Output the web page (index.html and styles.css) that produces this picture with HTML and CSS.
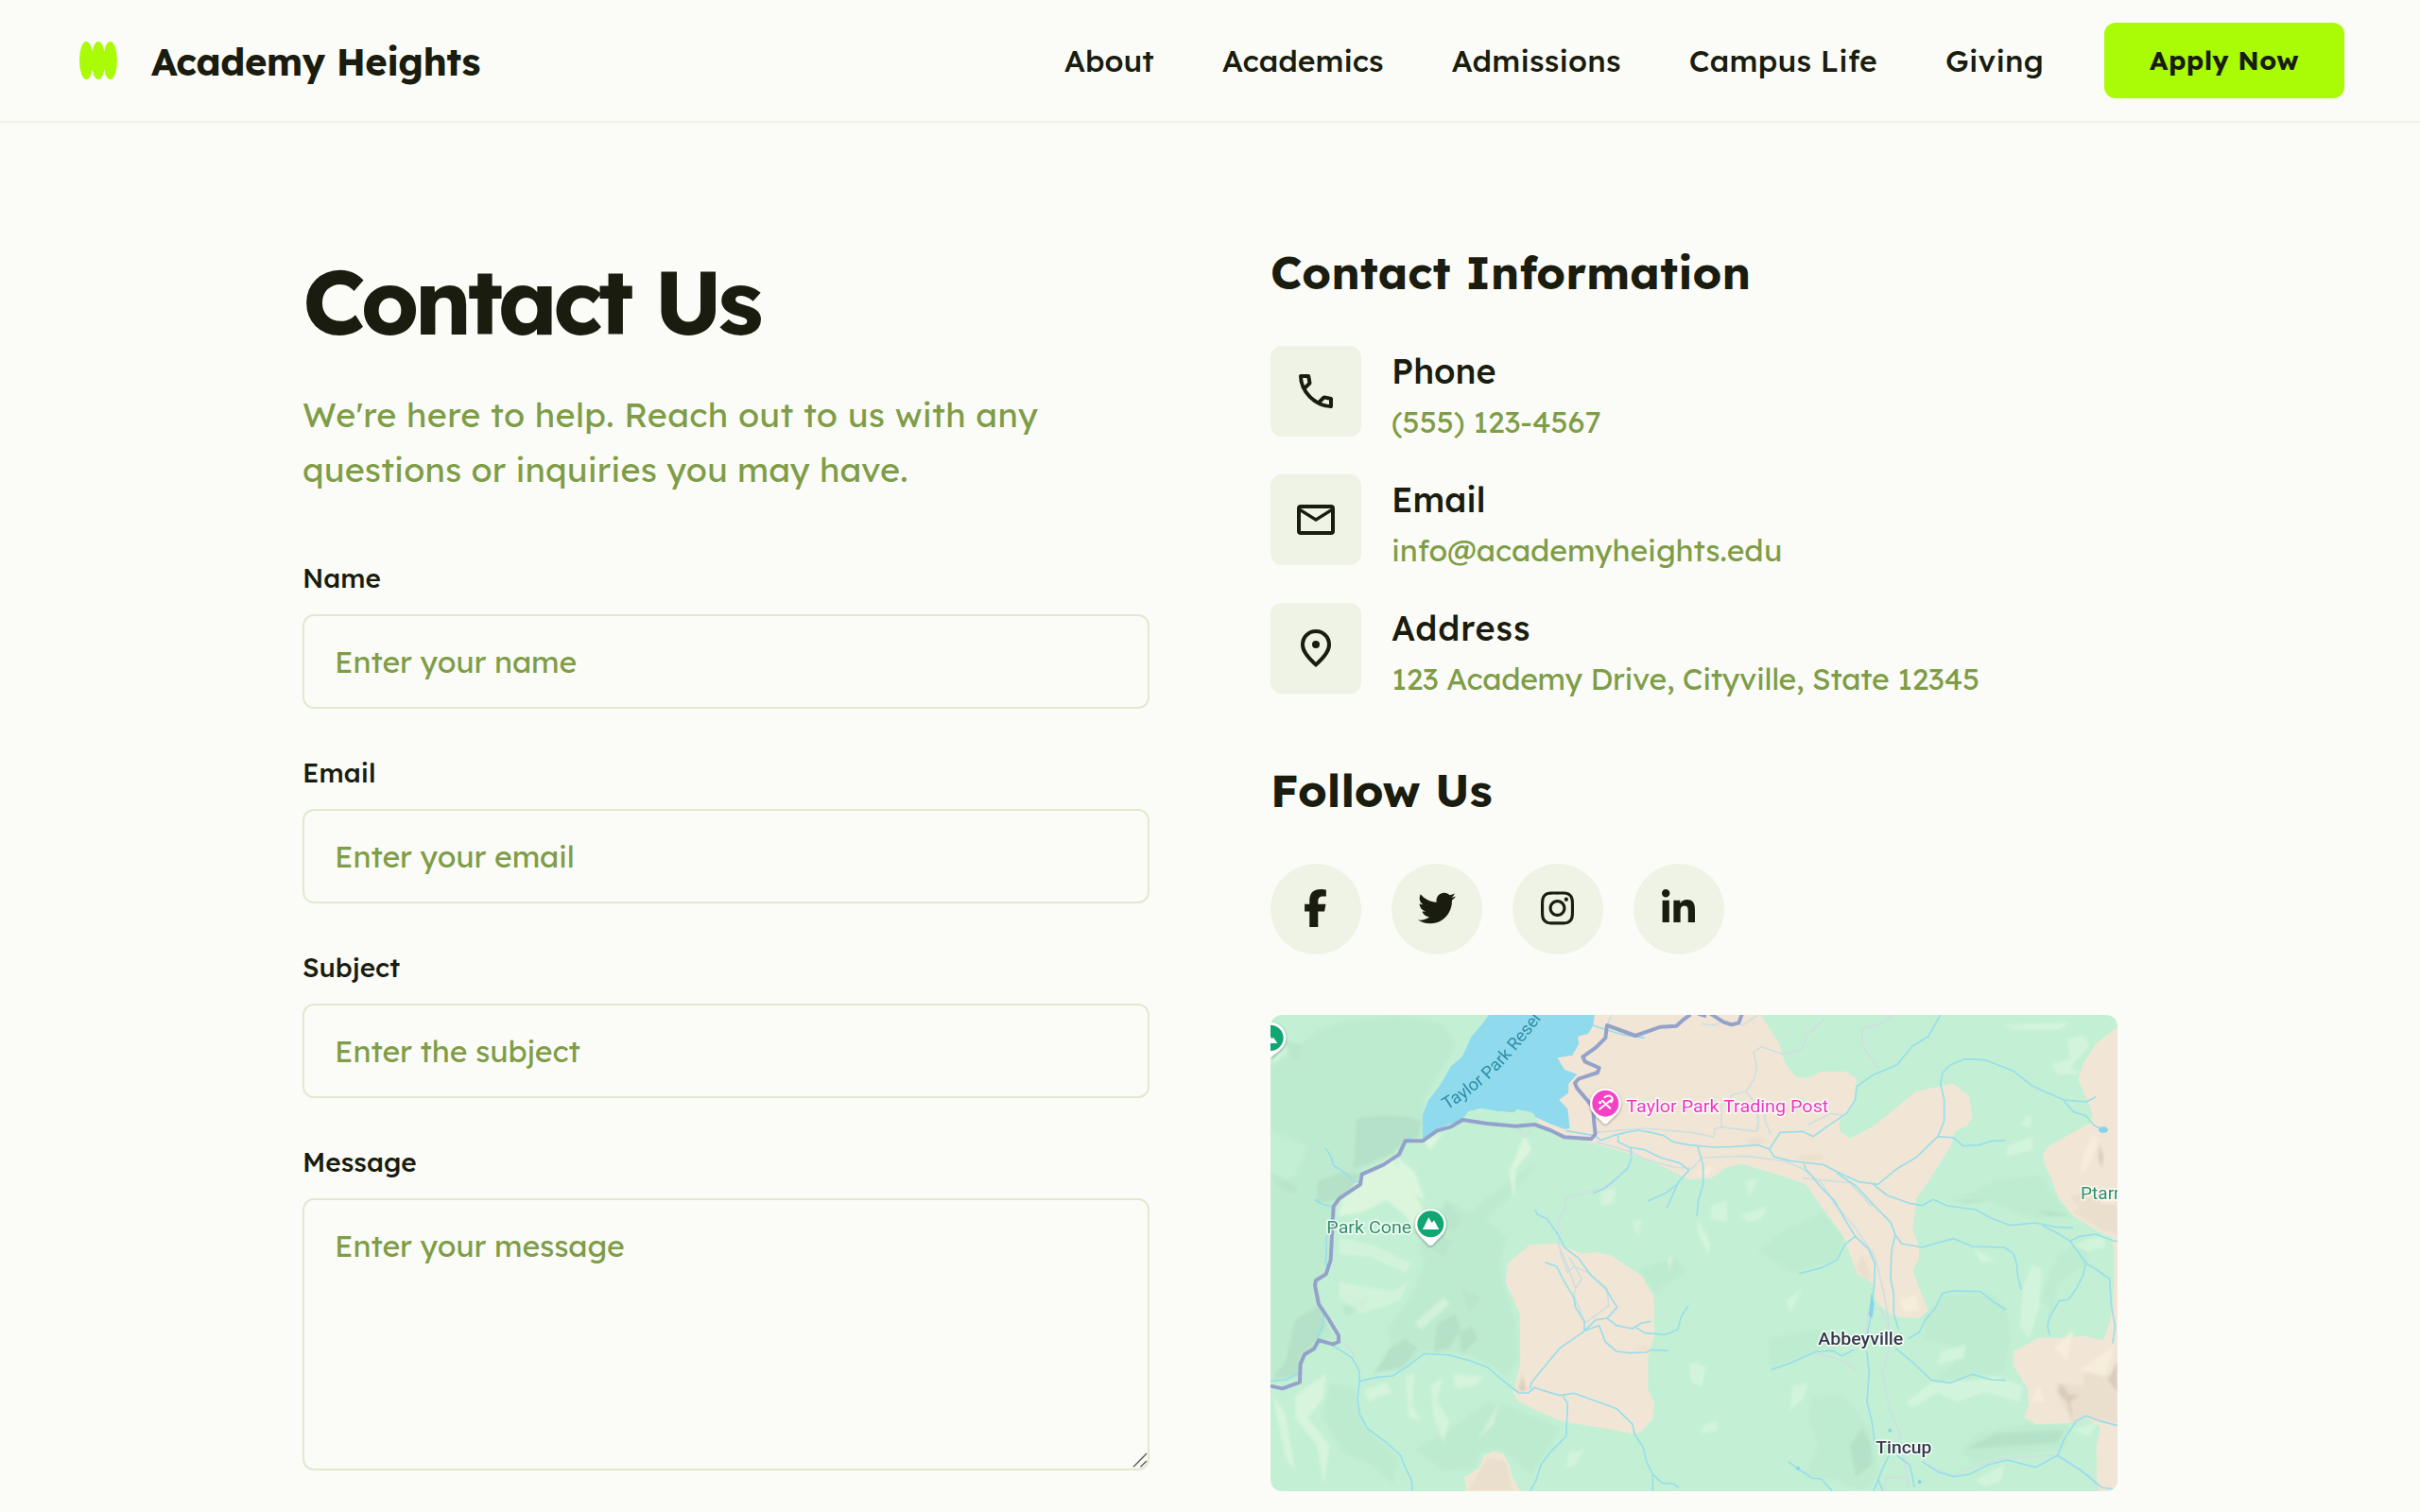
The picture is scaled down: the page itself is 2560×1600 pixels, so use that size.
FILE: index.html
```html
<!DOCTYPE html>
<html lang="en">
<head>
<meta charset="utf-8">
<title>Academy Heights – Contact Us</title>
<link rel="stylesheet" href="styles.css">
</head>
<body>
<header class="header">
  <div class="brand">
    <svg class="brand-mark" viewBox="0 0 48 48" aria-hidden="true"><ellipse cx="11.3" cy="24" rx="7.3" ry="20"/><ellipse cx="24" cy="24" rx="7.3" ry="20"/><ellipse cx="36.6" cy="24" rx="7.3" ry="20"/></svg>
    <span class="brand-name">Academy Heights</span>
  </div>
  <nav class="nav">
    <div class="links">
      <a>About</a>
      <a>Academics</a>
      <a class="loose">Admissions</a>
      <a class="loose">Campus Life</a>
      <a class="loose">Giving</a>
    </div>
    <button class="apply" type="button">Apply Now</button>
  </nav>
</header>

<main class="main">
  <section class="form-column">
    <h1>Contact Us</h1>
    <p class="intro"><span class="intro-lead">We're here to help. Reach out to us with any</span><br>questions or inquiries you may have.</p>
    <form class="form">
      <div class="field"><label for="name">Name</label><input id="name" placeholder="Enter your name"></div>
      <div class="field"><label for="email">Email</label><input id="email" placeholder="Enter your email"></div>
      <div class="field"><label for="subject">Subject</label><input id="subject" placeholder="Enter the subject"></div>
      <div class="field message-field"><label for="message">Message</label><textarea id="message" placeholder="Enter your message"></textarea>
        <svg class="grip" viewBox="0 0 16 16" aria-hidden="true"><path d="M1 15.3 15 1M8.5 15.3 15 9"/></svg>
      </div>
    </form>
  </section>

  <section class="info-column">
    <h2>Contact Information</h2>
    <div class="contacts">
      <div class="contact">
        <div class="tile"><svg viewBox="0 0 24 24"><path d="M19.95 21q-3.125 0-6.175-1.363t-5.55-3.862-3.862-5.55T3 4.05q0-.45.3-.75T4.05 3H8.1q.35 0 .625.238t.325.562l.65 3.5q.05.4-.025.675T9.4 8.45L6.975 10.9q.5.925 1.187 1.787t1.513 1.663q.775.775 1.625 1.438T13.1 17l2.35-2.35q.225-.225.588-.337t.712-.063l3.45.7q.35.1.575.363T21 15.9v4.05q0 .45-.3.75t-.75.3zM6.025 9l1.65-1.65L7.25 5H5.025q.125 1.025.35 2.025T6.025 9zm8.95 8.95q.975.425 1.988.675T19 18.95v-2.2l-2.35-.475z"/></svg></div>
        <div class="contact-text"><h3>Phone</h3><p>(555) 123-4567</p></div>
      </div>
      <div class="contact">
        <div class="tile"><svg viewBox="0 0 24 24"><path fill-rule="evenodd" d="M4 4h16q2 0 2 2v12q0 2-2 2H4q-2 0-2-2V6q0-2 2-2zm8 9L4 8v10h16V8zm0-2 8-5H4z"/></svg></div>
        <div class="contact-text"><h3>Email</h3><p>info@academyheights.edu</p></div>
      </div>
      <div class="contact">
        <div class="tile"><svg viewBox="0 0 24 24"><path d="M12 19.35q3.05-2.8 4.525-5.087T18 10.2q0-2.725-1.737-4.462T12 4 7.738 5.738 6 10.2q0 1.775 1.475 4.063T12 19.35zM12 22q-4.025-3.425-6.012-6.362T4 10.2q0-3.75 2.413-5.975T12 2t5.588 2.225T20 10.2q0 2.5-1.987 5.438T12 22z" fill-rule="evenodd"/><circle cx="12" cy="10" r="2"/></svg></div>
        <div class="contact-text"><h3 class="address-title">Address</h3><p class="address">123 Academy Drive, Cityville, State 12345</p></div>
      </div>
    </div>
    <h2 class="follow-title">Follow Us</h2>
    <div class="social">
      <a class="round"><svg viewBox="0 0 320 512"><path d="M80 299.3V512H196V299.3h86.5l18-97.8H196V166.9c0-51.7 20.3-71.5 72.7-71.5c16.3 0 29.4 .4 37 1.2V7.9C291.4 4 256.4 0 236.2 0C129.3 0 80 50.5 80 159.4v42.1H14v97.8H80z"/></svg></a>
      <a class="round"><svg viewBox="0 0 512 512"><path d="M459.37 151.716c.325 4.548.325 9.097.325 13.645 0 138.72-105.583 298.558-298.558 298.558-59.452 0-114.68-17.219-161.137-47.106 8.447.974 16.568 1.299 25.34 1.299 49.055 0 94.213-16.568 130.274-44.832-46.132-.975-84.792-31.188-98.112-72.772 6.498.974 12.995 1.624 19.818 1.624 9.421 0 18.843-1.3 27.614-3.573-48.081-9.747-84.143-51.98-84.143-102.985v-1.299c13.969 7.797 30.214 12.67 47.431 13.319-28.264-18.843-46.781-51.005-46.781-87.391 0-19.492 5.197-37.36 14.294-52.954 51.655 63.675 129.3 105.258 216.365 109.807-1.624-7.797-2.599-15.918-2.599-24.04 0-57.828 46.782-104.934 104.934-104.934 30.213 0 57.502 12.67 76.67 33.137 23.715-4.548 46.456-13.32 66.599-25.34-7.798 24.366-24.366 44.833-46.132 57.827 21.117-2.273 41.584-8.122 60.426-16.243-14.292 20.791-32.161 39.308-52.628 54.253z"/></svg></a>
      <a class="round"><svg viewBox="0 0 448 512"><path d="M224.1 141c-63.6 0-114.9 51.3-114.9 114.9s51.3 114.9 114.9 114.9S339 319.5 339 255.9 287.7 141 224.1 141zm0 189.6c-41.1 0-74.7-33.5-74.7-74.7s33.5-74.7 74.7-74.7 74.7 33.5 74.7 74.7-33.6 74.7-74.7 74.7zm146.4-194.3c0 14.9-12 26.8-26.8 26.8-14.9 0-26.8-12-26.8-26.8s12-26.8 26.8-26.8 26.8 12 26.8 26.8zm76.1 27.2c-1.7-35.9-9.9-67.7-36.2-93.9-26.2-26.2-58-34.4-93.9-36.2-37-2.1-147.9-2.1-184.9 0-35.8 1.7-67.6 9.9-93.9 36.1s-34.4 58-36.2 93.9c-2.1 37-2.1 147.9 0 184.9 1.7 35.9 9.9 67.7 36.2 93.9s58 34.4 93.9 36.2c37 2.1 147.9 2.1 184.9 0 35.9-1.7 67.7-9.9 93.9-36.2 26.2-26.2 34.4-58 36.2-93.9 2.1-37 2.1-147.8 0-184.8zM398.8 388c-7.8 19.6-22.9 34.7-42.6 42.6-29.5 11.7-99.5 9-132.1 9s-102.7 2.6-132.1-9c-19.6-7.8-34.7-22.9-42.6-42.6-11.7-29.5-9-99.5-9-132.1s-2.6-102.7 9-132.1c7.8-19.6 22.9-34.7 42.6-42.6 29.5-11.7 99.5-9 132.1-9s102.7-2.6 132.1 9c19.6 7.8 34.7 22.9 42.6 42.6 11.7 29.5 9 99.5 9 132.1s2.7 102.7-9 132.1z"/></svg></a>
      <a class="round"><svg viewBox="0 0 448 512"><path d="M100.28 448H7.4V148.9h92.88zM53.79 108.1C24.09 108.1 0 83.5 0 53.8a53.79 53.79 0 0 1 107.58 0c0 29.7-24.1 54.3-53.79 54.3zM447.9 448h-92.68V302.4c0-34.7-.7-79.2-48.29-79.2-48.29 0-55.69 37.7-55.69 76.7V448h-92.78V148.9h89.08v40.8h1.3c12.4-23.5 42.69-48.3 87.88-48.3 94 0 111.28 61.9 111.28 142.3V448z"/></svg></a>
    </div>

    <svg class="map" viewBox="12 12 2688 1512" preserveAspectRatio="none">
      <defs>
        <filter id="soft" x="-5%" y="-5%" width="110%" height="110%"><feGaussianBlur stdDeviation="4"/></filter>
        <filter id="shadow" x="-30%" y="-30%" width="160%" height="160%"><feDropShadow dx="0" dy="3" stdDeviation="4" flood-opacity=".4"/></filter>
        <path id="lake-line" d="M572 314 Q650 265 710 212 Q800 125 905 -22"/>
      </defs>
      <rect x="12" y="12" width="2688" height="1512" fill="#c3f0d5"/>

      <!-- forest relief, shaded slopes -->
      <g filter="url(#soft)">
        <g fill="#bdebd0">
          <path d="M12 170 60 150 160 60 260 30 420 12 560 40 600 110 540 210 500 280 495 400 440 410 400 450 300 510 290 560 210 600 205 700 190 830 150 870 170 940 220 1040 150 1060 100 1100 100 1170 12 1180 12 560 90 520 130 430 60 400 12 380Z"/>
          <path d="M580 600 640 640 740 560 860 480 760 600 700 660 760 720 740 800 760 900 790 980 800 1100 760 1160 700 1120 640 1090 500 1080 430 1140 340 1150 400 1080 380 1010 460 900 500 800 480 740 540 700Z"/>
          <path d="M200 1180 280 1200 310 1320 420 1420 400 1500 330 1440 240 1400 180 1290Z"/>
          <path d="M470 1390 580 1330 700 1240 760 1250 860 1290 930 1320 900 1380 840 1470 800 1440 740 1390 680 1400 660 1450 560 1460Z"/>
          <path d="M1180 820 1300 780 1330 830 1260 870 1240 900Z"/>
        </g>
        <g fill="#b5e1c8">
          <path d="M285 340 370 330 450 335 495 350 480 400 430 420 400 455 330 480 275 500Z"/>
          <path d="M160 540 240 510 300 520 290 555 220 600 160 610Z"/>
          <path d="M90 980 170 930 190 1000 150 1060 110 1090 100 1160 20 1165 60 1110Z"/>
          <path d="M540 990 600 960 615 1010 580 1070 530 1080ZM610 1020 650 1000 670 1040 620 1090ZM390 1070 440 1040 480 1070 430 1130 340 1150Z"/>
          <path opacity=".5" d="M530 700 590 730 560 780 530 760ZM570 600 620 660 590 700 540 650ZM620 880 680 910 640 960Z"/>
          <path opacity=".6" d="M12 510 100 560 90 580 20 550ZM60 90 110 110 100 160 70 140ZM240 940 330 905 310 940 250 965Z"/>
        </g>
        <g fill="#dcf5dd">
          <path d="M300 525 400 465 480 600 510 650 480 700 430 640 380 600 300 640 225 650 240 600Z"/>
          <path d="M405 455 470 510 500 600 450 570ZM495 412 560 385 520 440ZM820 390 840 440 790 500 785 600 770 510Z"/>
          <path opacity=".6" d="M230 720 330 740 460 800 440 830 330 780 230 770ZM230 860 400 890 450 860 420 920 300 960 230 910Z"/>
          <path opacity=".8" d="M90 1220 190 1150 180 1230 130 1290 200 1380 180 1500 160 1380 90 1290ZM20 1220 60 1280 90 1460 60 1420Z"/>
          <path opacity=".7" d="M310 1200 380 1180 400 1210 320 1240ZM440 1160 470 1150 460 1250 490 1300 450 1290ZM520 1190 560 1160 540 1240 580 1300 560 1370 530 1290ZM740 1240 720 1310 670 1360ZM590 1150 690 1160 660 1190 600 1200Z"/>
          <path opacity=".7" d="M470 990 560 910 580 930 490 1010ZM12 175 60 90 60 130ZM1060 570 1110 560 1100 610 1060 620ZM1160 670 1190 660 1180 720Z"/>
          <path opacity=".6" d="M1270 790 1290 770 1280 830ZM1340 1120 1370 1110 1375 1180 1345 1170ZM960 1400 1010 1390 980 1440 950 1450Z"/>
        </g>
        <g transform="translate(1350 0)">
          <g fill="#bbe9cf" opacity=".6">
            <path d="M210 760 300 690 420 640 480 720 460 790 380 810 320 830ZM240 1040 400 1010 480 1060 400 1080 250 1130Z"/>
            <path d="M380 1230 480 1220 560 1320 580 1380 590 1480 540 1520 440 1480 360 1480 400 1380 370 1300Z"/>
            <path d="M740 960 800 900 960 900 1000 950 1010 1050 990 1140 880 1160 760 1180 830 1120 860 1070 740 1040Z"/>
            <path d="M860 590 960 540 1100 520 1150 590 1200 650 1090 660 960 610ZM1110 900 1160 780 1240 720 1260 800 1160 860 1140 980Z"/>
            <path d="M850 1400 900 1340 1060 1310 1200 1310 1180 1390 1000 1410 900 1440Z"/>
          </g>
          <g fill="#b3e0c6" opacity=".8">
            <path d="M500 1380 540 1320 570 1380 570 1440 520 1480ZM870 1390 960 1340 1180 1330 1160 1370 1010 1380ZM1090 630 1210 650 1130 650ZM820 600 950 600 870 610Z"/>
          </g>
          <g fill="#d3f4dc">
            <path d="M990 45 1200 35 1170 60 1020 60ZM1190 90 1240 75 1260 110 1200 180 1240 200 1160 200 1140 170 1200 150Z"/>
            <path d="M60 620 110 600 110 670 60 660ZM20 660 60 740 50 770 15 700ZM150 650 240 620 220 660 180 670ZM170 540 210 530 180 590Z"/>
            <path d="M1060 330 1080 340 1070 370 1045 360ZM1000 430 1080 395 1080 440 1000 460ZM1080 800 1110 820 1100 940 1070 1040 1040 1000 1050 880ZM890 750 960 790 920 800ZM1210 740 1310 710 1310 750 1250 760Z"/>
            <path d="M790 1080 870 1060 860 1100 780 1120ZM680 1240 760 1180 930 1170 960 1160 1050 1190 1040 1240 930 1210 840 1240 780 1210 700 1260Z"/>
            <path d="M320 1190 370 1180 350 1230 310 1270ZM30 1320 80 1300 80 1330 30 1340ZM0 1120 45 1130 30 1190 0 1180ZM900 1490 990 1440 980 1490 930 1510ZM1210 1330 1290 1300 1260 1350ZM300 920 350 880 310 960Z"/>
          </g>
        </g>
      </g>

      <!-- open land -->
      <g fill="#f1e6d5">
        <path d="M1035 12H1568L1625 100 1645 165 1680 210 1715 212 1760 192 1840 192 1872 215 1870 245 1862 300 1840 328 1818 350V380L1850 405 1910 375 1970 330 2060 255 2130 240 2178 230 2230 270 2240 340 2220 365 2185 380 2170 430 2110 525 2062 595 2050 695 2070 745V785L2050 825 2075 890 2100 950 2070 975 1990 970 1935 925 1925 865 1875 835 1850 770 1830 715 1760 620 1710 548 1625 520 1510 485 1460 495 1410 530 1340 535 1240 485 1160 455 1040 420 950 395 880 372 850 335 900 200 970 60Z"/>
        <path d="M835 742 925 738 1000 770 1045 765 1090 775 1190 840 1228 905 1230 1030 1210 1100V1200L1230 1245 1225 1295 1185 1338 1160 1342 1080 1325 940 1303 860 1270 800 1240 783 1210 805 1120 803 960 758 860 765 800Z"/>
        <path d="M632 1525 628 1480 675 1450 690 1410 720 1398 750 1405 770 1440 780 1480 805 1525Z"/>
        <path d="M2700 50 2630 105 2590 170 2575 215 2600 275 2620 320 2615 355 2550 390 2480 430 2463 455 2470 490 2490 530 2510 590 2560 650 2640 700 2680 715 2690 760V840L2685 940 2675 990 2655 1045 2585 1030 2550 1038 2450 1037 2370 1080V1125L2415 1200 2418 1250 2405 1290 2440 1312 2550 1308 2590 1285 2645 1320 2633 1390 2635 1525H2700Z"/>
      </g>
      <g filter="url(#soft)">
        <g fill="#e9dccb" opacity=".8">
          <path d="M795 1200 810 1140 830 1210ZM1170 1070 1210 1060 1200 1080ZM1520 410 1560 400 1590 415 1540 425ZM1675 460 1760 455 1770 470 1700 475ZM1870 820 1890 770 1920 850 1900 850Z"/>
          <path d="M2560 640 2640 560 2700 620V710L2640 690ZM2500 1180 2590 1190 2600 1120 2700 1170V1310L2600 1290 2560 1310 2520 1240ZM2550 590 2610 570 2580 620ZM640 1520 700 1420 760 1430 780 1520Z"/>
        </g>
        <path fill="#d9ccba" d="M2642 420 2655 460 2650 500 2640 470ZM2520 1180 2545 1215 2580 1220 2550 1240 2560 1310 2540 1240 2510 1210ZM2670 1170 2700 1110V1210ZM800 1205 812 1160 822 1205Z"/>
        <path fill="#f6edda" d="M2590 460 2620 390 2640 410 2610 490 2580 520ZM2500 1070 2560 1010 2540 1110ZM2580 1140 2690 1060 2660 1160ZM2425 1240 2450 1190 2470 1240ZM2640 610 2680 570 2690 610ZM2010 920 2060 900 2070 950 2020 950ZM1350 515 1420 490 1400 520Z"/>
      </g>
      <path fill="#90daee" d="M705 12H1040L1036 45 1020 72 988 80 990 105 970 140 922 148 945 185 985 200 958 230 957 260 928 282 955 310 962 372 945 375 900 358 850 335 840 320 795 312 785 322 730 318 680 308 640 318 620 345 570 362 530 385 495 408V330L512 285 550 235 585 175 620 145 650 80 685 40Z"/>
      <path fill="#c3f0d5" d="M625 343 645 318 680 308 730 318 785 322 795 312 850 328 853 355 790 362 700 354Z"/>

      <!-- minor roads -->
      <g class="track">
        <path d="M1040 385 1200 372 1350 385 1420 400M1045 415 1160 448 1200 470 1290 495 1350 500 1380 465 1520 460 1640 475 1700 500 1760 545 1800 610 1870 690 1930 780 1960 900 1975 1000 1975 1070 1955 1150 1975 1260 2010 1340 2025 1440 2040 1524"/>
        <path d="M1155 460 1150 490 1110 530 1060 565 950 590 945 630 925 670 925 740 960 820 980 880 975 900 1010 990 1085 935 1080 880 1020 830 975 810 955 830 930 760M980 880 1000 850 960 780M795 370 820 400 840 375M1095 12 1080 45M228 1045 265 1070 280 1100"/>
        <path d="M1420 395V375L1440 368 1555 382 1560 350 1550 290 1520 255 1545 220 1555 180 1545 130 1570 113 1640 137 1700 120 1715 75 1770 25M1443 368V300L1480 265 1520 255M1580 300 1582 350 1600 390M1560 330 1560 375M1740 350 1720 360 1790 325 1830 330"/>
        <path d="M1990 12 1950 40 1890 55 1890 110 1940 180M1380 40 1420 45 1450 30 1510 45 1560 12M1700 530 1850 545 1920 620M1900 1030 1910 950 1950 945 1970 1000M1740 1085 1830 1110 1870 1140M2080 1430 2170 1475 2250 1445 2340 1420 2500 1410 2620 1480 2640 1524M1960 1524 1965 1480 2020 1480"/>
      </g>
      <!-- creeks -->
      <g class="creek">
        <path d="M187 435 203 460 212 490 245 510 275 540 295 542M150 598 175 612 205 620M208 640 190 720 188 800 195 830M180 940 178 1000 160 1035 215 1065 270 1100 293 1140 295 1175 288 1230 295 1280 320 1325 380 1370 425 1410 440 1450 460 1490 462 1524M12 1175 60 1170 100 1150M440 412 460 398"/>
        <path d="M295 1175 350 1162 400 1158 450 1125 500 1087 580 1092 640 1108 700 1130 740 1165 800 1212 830 1212 850 1195 880 1205 930 1220 975 1213 1050 1240 1110 1262 1160 1310 1168 1345 1195 1385 1205 1430 1225 1470 1225 1524M1225 1470 1255 1498 1290 1500 1308 1512M940 1222 955 1245 950 1350 900 1400 870 1440 855 1490 835 1524"/>
        <path d="M835 1200 840 1180 880 1130 930 1070 1005 1018 1045 980 1080 975 1112 940 1075 880 1030 840 990 785 945 750 925 710 890 660 858 645 852 630M883 797 920 810 940 850 975 910 980 940 1008 985 1008 1015 1055 998 1075 1050 1110 1080 1150 1085 1205 1083 1220 1075 1275 1078M1080 975 1110 998 1160 1008 1190 990 1220 985M1165 1000 1200 1022 1265 1027 1305 1010 1315 970 1338 935"/>
        <path d="M950 380 1040 395 1060 410 1100 395 1140 385 1180 378 1220 385 1260 395 1290 415 1340 425 1420 432 1480 430 1560 425 1595 438 1610 462 1660 475 1700 480 1765 487 1830 520 1880 542 1940 550 2000 500 2060 465 2130 398 2150 350 2150 280 2138 230 2145 195 2170 170 2215 152 2280 155 2370 190 2430 238 2530 282 2600 288 2632 272"/>
        <path d="M1115 395 1115 415 1150 432 1200 440 1250 465 1310 482 1340 505 1305 545 1270 625M1305 548 1270 575 1210 603M1155 432 1158 460M1158 465 1145 500 1100 540 1070 565 1035 578M1368 430 1385 490 1385 550 1370 600 1365 650M1035 45 1080 60 1130 75 1200 85"/>
        <path d="M1595 438 1630 385 1700 382 1735 398 1780 365 1840 325 1868 280 1872 240 1920 205 2000 170 2050 110 2100 80 2138 12M1705 485 1710 500 1760 560 1800 600 1840 670 1868 715 1910 755 1930 800 1928 870 1920 930 1915 980 1905 1030M1868 715 1835 740 1810 790 1760 815 1690 833"/>
        <path d="M1810 515 1870 555 1930 620 1980 670 1995 710 1983 760 1980 850 1990 900 1990 960 2005 1010M1995 710 2015 738 2080 750 2130 735 2180 722 2240 747 2340 750 2370 770 2380 800 2383 840 2395 885M1925 550 1970 585 2040 610 2080 617 2115 598 2160 618 2250 630 2300 658 2360 680 2440 672 2500 685 2560 688M2460 680 2500 700 2550 730 2600 800 2640 825 2675 850 2680 930 2692 1000 2685 1055M2550 730 2580 715 2630 708 2690 730H2700M2600 800 2590 840 2570 880 2545 915 2515 920 2485 970 2478 1000 2485 1028"/>
        <path d="M2130 398 2180 402 2210 428 2260 425 2300 412 2345 411M2530 285 2560 320 2600 332 2625 362 2650 375M2035 1040 2070 1020 2090 980 2120 945 2145 895 2180 888 2265 890 2300 918 2345 948M1600 1138 1650 1122 1700 1100 1745 1080 1800 1078 1825 1095 1865 1075M1995 1070 2050 1115 2110 1172 2170 1180 2240 1153 2300 1170 2345 1172M1905 1080 1912 1150 1905 1240 1920 1300 1930 1370"/>
        <path d="M1655 1430 1690 1455 1730 1482 1760 1485 1795 1524M2080 1430 2130 1462 2180 1478 2230 1470 2290 1440 2350 1425 2440 1448 2510 1410 2580 1455 2650 1512 2690 1518M2510 1410 2530 1360 2570 1300 2600 1285 2640 1300 2700 1316M2000 1410 2040 1440 2050 1480 2055 1510M1975 1410 1955 1450 1940 1490 1925 1524M1940 1485 1955 1524"/>
      </g>
      <g fill="#84d5ec"><ellipse cx="2655" cy="377" rx="15" ry="10"/><circle cx="1978" cy="1331" r="6"/><circle cx="2072" cy="1494" r="6"/><circle cx="1686" cy="1451" r="6"/><path d="M1919 895 1928 930 1922 975 1910 965Z"/></g>

      <!-- main road -->
      <path class="road" d="M12 1190 50 1198 105 1178 107 1120 120 1090 150 1072 165 1045 210 1057 228 1050V1030L195 975 165 930 153 870 156 855 188 835 203 790 212 620 230 595 297 550 302 518 370 488 420 455 440 412H495L540 380 585 367 622 345 700 357 790 365 850 360 900 378 945 400 1030 406 1043 390 1038 345 1036 305 985 245 978 228 990 215 1050 195 1055 180 1010 160 1003 145 1045 115 1075 85 1080 45 1170 78 1250 50 1300 47 1325 25 1345 10M1368 8 1395 16M1408 8 1450 35 1475 43 1498 37 1508 10"/>

      <!-- pins -->
      <g filter="url(#shadow)" fill="#fff">
        <path d="M520 628a49 49 0 0 1 49 49c0 30-25 42-41 63a10 10 0 0 1-16 0c-16-21-41-33-41-63a49 49 0 0 1 49-49z"/>
        <path d="M1075 245a49 49 0 0 1 49 49c0 30-25 40-41 60a10 10 0 0 1-16 0c-16-20-41-30-41-60a49 49 0 0 1 49-49z"/>
        <path d="M12 36a49 49 0 0 1 49 49c0 30-25 42-49 63z"/>
      </g>
      <circle cx="520" cy="676" r="42" fill="#12a673"/><circle cx="12" cy="85" r="41" fill="#12a673"/><circle cx="1075" cy="293" r="42" fill="#f541c6"/>
      <path fill="#fff" d="M495 693 514 655 524 672 531 664 547 693ZM0 102 12 80 16 88 21 83 34 102Z"/>
      <g fill="none" stroke="#fff" stroke-width="6" stroke-linecap="round"><path d="M1056 311 1092 283M1065 284 1090 308M1072 274Q1084 264 1094 272Q1101 281 1093 289"/><circle cx="1058" cy="290" r="2"/></g>

      <g class="map-text">
        <text class="trade" x="1141" y="320" textLength="642" lengthAdjust="spacingAndGlyphs">Taylor Park Trading Post</text>
        <text class="peak" x="190" y="705" textLength="270" lengthAdjust="spacingAndGlyphs">Park Cone</text>
        <text class="peak" x="2583" y="598">Ptarm</text>
        <text class="town" x="1750" y="1060" textLength="270" lengthAdjust="spacingAndGlyphs">Abbeyville</text>
        <text class="town" x="1933" y="1405" textLength="177" lengthAdjust="spacingAndGlyphs">Tincup</text>
        <text class="lake"><textPath href="#lake-line">Taylor Park Reser</textPath></text>
      </g>
    </svg>
  </section>
</main>
</body>
</html>
```
FILE: styles.css
```css
* { box-sizing: border-box; margin: 0; }
body {
  height: 1600px;
  overflow: hidden;
  background: #fbfcf8;
  color: #191c0e;
  font-family: Lexend, Inter, "Liberation Sans", sans-serif;
}

/* Header */
.header {
  display: flex;
  justify-content: space-between;
  align-items: center;
  height: 130px;
  padding: 0 80px;
  border-bottom: 2px solid #eff2e6;
}
.brand { display: flex; align-items: center; gap: 32px; }
.brand-mark { width: 48px; height: 48px; fill: #a9fb06; }
.brand-name { font-size: 40px; font-weight: 700; line-height: 50px; letter-spacing: -.015em; padding-top: 2px; }
.nav { display: flex; align-items: center; gap: 64px; }
.links { display: flex; gap: 72px; font-size: 32px; font-weight: 500; line-height: 48px; }
.loose { letter-spacing: .22px; }
.apply {
  width: 254px;
  height: 80px;
  padding-bottom: 3px;
  border: 0;
  border-radius: 12px;
  background: #a9fb06;
  color: inherit;
  font: 700 28px Lexend, Inter, sans-serif;
  letter-spacing: .015em;
}

/* Two columns */
.main {
  display: grid;
  grid-template-columns: 896px 896px;
  gap: 128px;
  padding: 128px 320px 0;
}
h1 {
  font-size: 96px;
  font-weight: 700;
  line-height: 120px;
  letter-spacing: -.052em;
}
.intro {
  margin-top: 32px;
  color: #7f9d47;
  font-size: 36px;
  line-height: 57.6px;
  letter-spacing: .09px;
}
.intro-lead { letter-spacing: .3px; }
.form { display: flex; flex-direction: column; gap: 46px; margin-top: 64.8px; }
.field { display: flex; flex-direction: column; gap: 17px; }
label { font-size: 28px; font-weight: 500; line-height: 43px; }
input, textarea {
  display: block;
  width: 100%;
  height: 100px;
  padding: 0 32px;
  border: 2px solid #e0e9d0;
  border-radius: 12px;
  background: transparent;
  color: inherit;
  font: 400 32px/48px Lexend, Inter, sans-serif;
  letter-spacing: -.14px;
}
input::placeholder, textarea::placeholder { color: #7f9d47; opacity: 1; }
textarea { height: 288px; padding-top: 24px; resize: none; }
.message-field { position: relative; }
.grip {
  position: absolute;
  right: 2px;
  bottom: 3px;
  width: 16px;
  height: 16px;
  fill: none;
  stroke: #555;
  stroke-width: 1.3;
}

/* Contact details */
h2 { font-size: 48px; font-weight: 700; line-height: 60px; letter-spacing: .06px; }
.follow-title { margin-top: 64px; }
.contacts { display: flex; flex-direction: column; gap: 32px; margin-top: 48px; }
.contact { display: flex; gap: 32px; height: 104px; }
.tile {
  display: grid;
  place-items: center;
  width: 96px;
  height: 96px;
  border-radius: 12px;
  background: #eff3e5;
}
.tile svg { width: 48px; height: 48px; fill: #191c0e; }
h3 { font-size: 36px; font-weight: 500; line-height: 54px; }
.contact p { margin-top: 2px; color: #7f9d47; font-size: 32px; line-height: 48px; letter-spacing: -.12px; }
.contact .address { letter-spacing: -.34px; }
.address-title { letter-spacing: .9px; }

.social { display: flex; gap: 32px; margin-top: 48px; }
.round {
  display: grid;
  place-items: center;
  width: 96px;
  height: 96px;
  padding: 0 1px 2px 0;
  border-radius: 50%;
  background: #eff3e5;
}
.round svg { height: 40px; fill: #191c0e; }

/* Map */
.map { display: block; width: 896px; height: 504px; margin-top: 64px; border-radius: 12px; }
.road { fill: none; stroke: #94a2cb; stroke-width: 12; stroke-linejoin: round; }
.creek path { fill: none; stroke: #98deea; stroke-width: 5; stroke-linejoin: round; }
.track path { fill: none; stroke: #cfdfe0; stroke-width: 5; stroke-linejoin: round; }
.map-text text {
  font-family: Roboto, sans-serif;
  font-size: 57px;
  paint-order: stroke;
  stroke: #fff;
  stroke-opacity: .85;
  stroke-width: 9px;
  stroke-linejoin: round;
}
.map-text .trade { fill: #ee35c2; }
.map-text .peak { fill: #2f8f68; }
.map-text .town { fill: #35394c; font-weight: 500; }
.map-text .lake { fill: #2e8ea6; stroke: none; font-size: 55px; }
```
